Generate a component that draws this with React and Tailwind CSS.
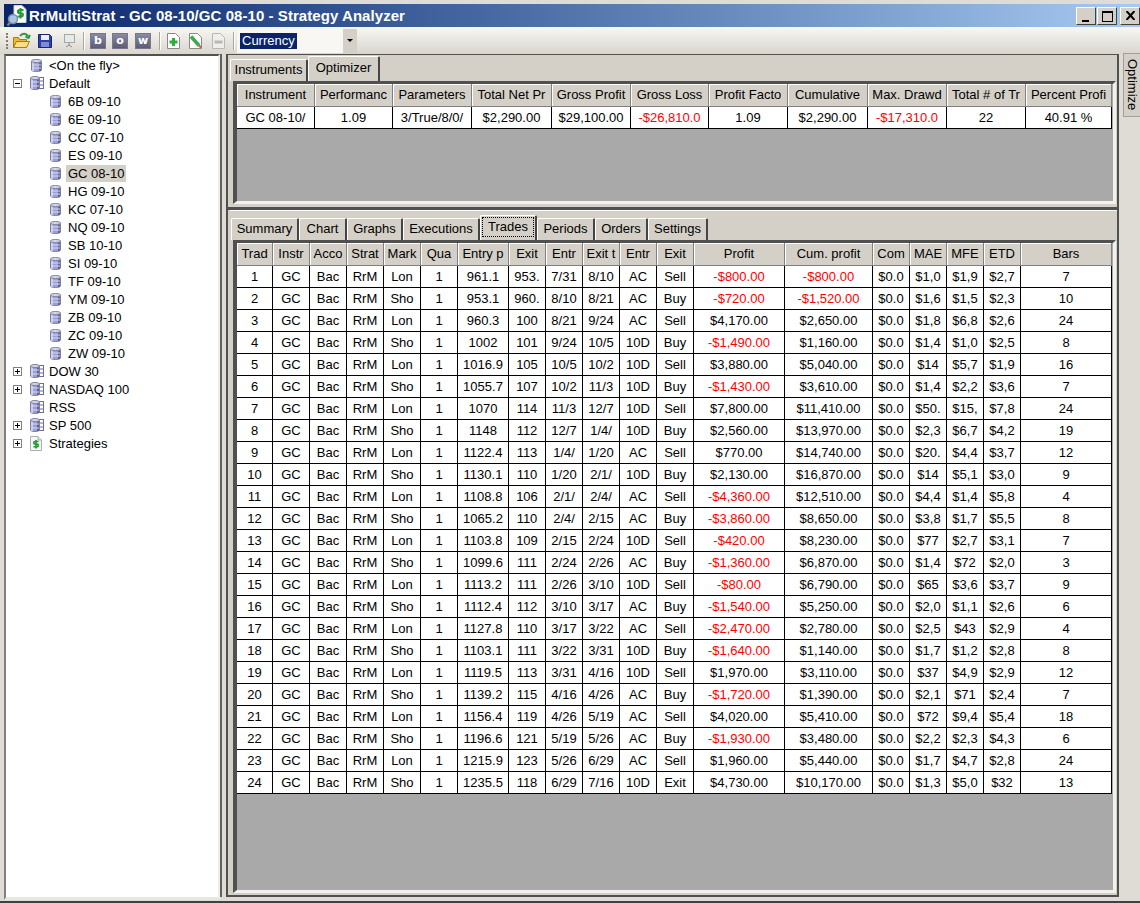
const TOP_COLS = [
  ['Instrument', 78, 'GC 08-10/'],
  ['Performanc', 78, '1.09'],
  ['Parameters', 79, '3/True/8/0/'],
  ['Total Net Pr', 80, '$2,290.00'],
  ['Gross Profit', 79, '$29,100.00'],
  ['Gross Loss', 78, '-$26,810.0'],
  ['Profit Facto', 79, '1.09'],
  ['Cumulative', 80, '$2,290.00'],
  ['Max. Drawd', 79, '-$17,310.0'],
  ['Total # of Tr', 79, '22'],
  ['Percent Profi', 86, '40.91 %'],
];

const COLS = [
  ['Trad', 36], ['Instr', 37], ['Acco', 37], ['Strat', 37], ['Mark', 37], ['Qua', 37],
  ['Entry p', 51], ['Exit', 37], ['Entr', 37], ['Exit t', 37], ['Entr', 37], ['Exit', 37],
  ['Profit', 91], ['Cum. profit', 88], ['Com', 37], ['MAE', 37], ['MFE', 37], ['ETD', 37], ['Bars', 91],
];

// entry, exit, entry time, exit time, entry name, exit name, profit, cum, mae, mfe, etd, bars
const TRADES = [
  ['961.1', '953.', '7/31', '8/10', 'AC', 'Sell', '-$800.00', '-$800.00', '$1,0', '$1,9', '$2,7', 7],
  ['953.1', '960.', '8/10', '8/21', 'AC', 'Buy', '-$720.00', '-$1,520.00', '$1,6', '$1,5', '$2,3', 10],
  ['960.3', '100', '8/21', '9/24', 'AC', 'Sell', '$4,170.00', '$2,650.00', '$1,8', '$6,8', '$2,6', 24],
  ['1002', '101', '9/24', '10/5', '10D', 'Buy', '-$1,490.00', '$1,160.00', '$1,4', '$1,0', '$2,5', 8],
  ['1016.9', '105', '10/5', '10/2', '10D', 'Sell', '$3,880.00', '$5,040.00', '$14', '$5,7', '$1,9', 16],
  ['1055.7', '107', '10/2', '11/3', '10D', 'Buy', '-$1,430.00', '$3,610.00', '$1,4', '$2,2', '$3,6', 7],
  ['1070', '114', '11/3', '12/7', '10D', 'Sell', '$7,800.00', '$11,410.00', '$50.', '$15,', '$7,8', 24],
  ['1148', '112', '12/7', '1/4/', '10D', 'Buy', '$2,560.00', '$13,970.00', '$2,3', '$6,7', '$4,2', 19],
  ['1122.4', '113', '1/4/', '1/20', 'AC', 'Sell', '$770.00', '$14,740.00', '$20.', '$4,4', '$3,7', 12],
  ['1130.1', '110', '1/20', '2/1/', '10D', 'Buy', '$2,130.00', '$16,870.00', '$14', '$5,1', '$3,0', 9],
  ['1108.8', '106', '2/1/', '2/4/', 'AC', 'Sell', '-$4,360.00', '$12,510.00', '$4,4', '$1,4', '$5,8', 4],
  ['1065.2', '110', '2/4/', '2/15', 'AC', 'Buy', '-$3,860.00', '$8,650.00', '$3,8', '$1,7', '$5,5', 8],
  ['1103.8', '109', '2/15', '2/24', '10D', 'Sell', '-$420.00', '$8,230.00', '$77', '$2,7', '$3,1', 7],
  ['1099.6', '111', '2/24', '2/26', 'AC', 'Buy', '-$1,360.00', '$6,870.00', '$1,4', '$72', '$2,0', 3],
  ['1113.2', '111', '2/26', '3/10', '10D', 'Sell', '-$80.00', '$6,790.00', '$65', '$3,6', '$3,7', 9],
  ['1112.4', '112', '3/10', '3/17', 'AC', 'Buy', '-$1,540.00', '$5,250.00', '$2,0', '$1,1', '$2,6', 6],
  ['1127.8', '110', '3/17', '3/22', 'AC', 'Sell', '-$2,470.00', '$2,780.00', '$2,5', '$43', '$2,9', 4],
  ['1103.1', '111', '3/22', '3/31', '10D', 'Buy', '-$1,640.00', '$1,140.00', '$1,7', '$1,2', '$2,8', 8],
  ['1119.5', '113', '3/31', '4/16', '10D', 'Sell', '$1,970.00', '$3,110.00', '$37', '$4,9', '$2,9', 12],
  ['1139.2', '115', '4/16', '4/26', 'AC', 'Buy', '-$1,720.00', '$1,390.00', '$2,1', '$71', '$2,4', 7],
  ['1156.4', '119', '4/26', '5/19', 'AC', 'Sell', '$4,020.00', '$5,410.00', '$72', '$9,4', '$5,4', 18],
  ['1196.6', '121', '5/19', '5/26', 'AC', 'Buy', '-$1,930.00', '$3,480.00', '$2,2', '$2,3', '$4,3', 6],
  ['1215.9', '123', '5/26', '6/29', 'AC', 'Sell', '$1,960.00', '$5,440.00', '$1,7', '$4,7', '$2,8', 24],
  ['1235.5', '118', '6/29', '7/16', '10D', 'Exit', '$4,730.00', '$10,170.00', '$1,3', '$5,0', '$32', 13],
];

const TREE = ['6B 09-10', '6E 09-10', 'CC 07-10', 'ES 09-10', 'GC 08-10', 'HG 09-10', 'KC 07-10', 'NQ 09-10', 'SB 10-10', 'SI 09-10', 'TF 09-10', 'YM 09-10', 'ZB 09-10', 'ZC 09-10', 'ZW 09-10'];

function Cylinder() {
  return (
    <svg width="11" height="13" viewBox="0 0 11 13" className="shrink-0 ml-[1px]">
      <path d="M.5 2v9c0 .9 2.200 1.500 5 1.500s5-.6 5-1.500V2z" fill="#9a9fd6" stroke="#7c7f9c" />
      <rect x="1" y="3" width="2" height="9" fill="#c9cbee" />
      <rect x="8" y="3" width="2" height="9" fill="#5e6396" />
      <path d="M1 6h9M1 9h9" stroke="#d9dbf2" />
      <ellipse cx="5.500" cy="2" rx="5" ry="1.500" fill="#dadcf2" stroke="#7c7f9c" />
    </svg>
  );
}

function DbGroup() {
  return (
    <svg width="14" height="14" viewBox="0 0 14 14" className="shrink-0">
      <rect x="8.500" y="1.500" width="5" height="11" fill="#fff" stroke="#6a7090" />
      <path d="M9 5h4M9 9h4" stroke="#6a7090" />
      <path d="M.5 2v10c0 .9 2 1.500 4.500 1.500s4.500-.6 4.500-1.500V2z" fill="#9a9fd6" stroke="#7c7f9c" />
      <rect x="1" y="3" width="2" height="10" fill="#c9cbee" />
      <rect x="7" y="3" width="2" height="10" fill="#5e6396" />
      <path d="M1 6h8M1 10h8" stroke="#d9dbf2" />
      <ellipse cx="5" cy="2" rx="4.500" ry="1.500" fill="#dadcf2" stroke="#7c7f9c" />
    </svg>
  );
}

function DollarDoc() {
  return (
    <svg width="12" height="15" viewBox="0 0 12 15" className="shrink-0">
      <path d="M.5.5h7.500l3.500 3.500v10.500H.5z" fill="#f6f8f6" stroke="#a8b0b0" />
      <path d="M8 .5V4h3.500" fill="#dfe4e4" stroke="#a8b0b0" />
      <path d="M8.500 5.500H5a1.200 1.200 0 0 0 0 2.600h2a1.200 1.200 0 0 1 0 2.600H3.500M6 4v8.500" fill="none" stroke="#1f9a35" strokeWidth="1.600" />
    </svg>
  );
}

function AppIcon() {
  return (
    <svg width="20" height="22" viewBox="0 0 20 22" className="shrink-0">
      <path d="M7 .5h8l4 4v13H7z" fill="#fff" stroke="#d0d4d8" />
      <path d="M16.500 5H12.500a1.500 1.500 0 0 0 0 3.200h1.800a1.500 1.500 0 0 1 0 3.200H10.500M13.500 3v10.500" fill="none" stroke="#1f9a35" strokeWidth="2" />
      <circle cx="6" cy="14" r="4.500" fill="#a9c4e4" stroke="#7a8aa8" strokeWidth="1.500" />
      <path d="M3 17.500l-2.500 3" stroke="#7a8298" strokeWidth="2.500" />
    </svg>
  );
}

function Expander({ open }) {
  return (
    <span className="w-[9px] h-[9px] border border-[#808080] bg-white relative shrink-0">
      <span className="absolute left-[1px] top-[3px] w-[5px] h-px bg-black" />
      {!open && <span className="absolute left-[3px] top-[1px] w-px h-[5px] bg-black" />}
    </span>
  );
}

function TreeRow({ indent, expander, open, icon, label, selected }) {
  return (
    <div className="h-[18px] flex items-center" style={{ paddingLeft: indent }}>
      <span className="w-[17px] shrink-0 flex items-center">{expander && <Expander open={open} />}</span>
      <span className="w-[17px] shrink-0 flex items-center">{icon}</span>
      <span className={`px-[2px] leading-[17px] ${selected ? 'bg-[#d4d0c8]' : ''}`}>{label}</span>
    </div>
  );
}

function LetterButton({ letter, className = '' }) {
  return (
    <span className={`w-[16px] h-[16px] bg-gradient-to-b from-[#8a8aa4] to-[#5c5c78] border border-[#77778c] text-white font-bold text-[11px] leading-[13px] text-center shrink-0 [font-family:'DejaVu_Sans',sans-serif] ${className}`}>{letter}</span>
  );
}

function ToolSep({ className = '' }) {
  return <span className={`w-px h-[18px] bg-[#a8a69e] shadow-[1px_0_0_#fff] shrink-0 ${className}`} />;
}

function Tab({ label, active, focused, width }) {
  return (
    <div className={`border-t border-l border-white border-r-2 border-r-[#444] rounded-t-[2px] flex items-center justify-center bg-[#d4d0c8] shrink-0 ${active ? 'h-[25px] pb-[3px] px-[1px]' : 'h-[22px] pb-[1px]'}`} style={{ width }}>
      {focused
        ? <span className="w-full h-[20px] flex items-center justify-center outline-1 outline-dotted outline-black -outline-offset-1">{label}</span>
        : label}
    </div>
  );
}

function HeaderCell({ label, width }) {
  return (
    <div className="h-[23px] shrink-0 flex items-center justify-center overflow-hidden whitespace-nowrap bg-[#d4d0c8] border-r border-b border-r-[#808080] border-b-[#808080] shadow-[inset_1px_1px_0_#fff]" style={{ width }}>
      {label}
    </div>
  );
}

function Cell({ width, red, children }) {
  return (
    <div className={`h-[22px] shrink-0 flex items-center justify-center overflow-hidden whitespace-nowrap bg-white border-r border-b border-black ${red ? 'text-[#ff0000]' : ''}`} style={{ width }}>
      {children}
    </div>
  );
}

function GridFrame({ className, children }) {
  return (
    <div className={`ml-[3px] w-[883px] shrink-0 bg-[#a9a9a9] border-t-[3px] border-l-4 border-t-[#505050] border-l-[#505050] border-r-[3px] border-b-[3px] border-r-[#f2f1ed] border-b-[#f2f1ed] ${className}`}>
      {children}
    </div>
  );
}

export default function App() {
  return (
    <div className="w-[1140px] h-[903px] overflow-hidden bg-[#dedcd5] flex flex-col text-[13px] text-black border-b-2 border-[#404040] [font-family:'Liberation_Sans',Arial,sans-serif]">
      {/* Title bar */}
      <div className="h-[23px] shrink-0 mt-[4px] ml-[4px] bg-gradient-to-r from-[#0a246a] to-[#a6caf0] flex items-center pl-[3px]">
        <AppIcon />
        <span className="ml-[2px] pt-px text-white font-bold text-[15px] tracking-[0.06px] flex-1 whitespace-nowrap">RrMultiStrat - GC 08-10/GC 08-10 - Strategy Analyzer</span>
        <span className="w-[20px] h-[18px] bg-[#d4d0c8] border border-t-white border-l-white border-r-[#404040] border-b-[#404040] relative">
          <span className="absolute left-[5px] bottom-[2px] w-[7px] h-[2px] bg-black" />
        </span>
        <span className="w-[20px] h-[18px] ml-[1px] bg-[#d4d0c8] border border-t-white border-l-white border-r-[#404040] border-b-[#404040] relative">
          <span className="absolute left-[4px] top-[3px] w-[11px] h-[11px] border border-t-2 border-black" />
        </span>
        <span className="w-[20px] h-[18px] ml-[3px] bg-[#d4d0c8] border border-t-white border-l-white border-r-[#404040] border-b-[#404040] flex items-center justify-center">
          <svg width="9" height="9" viewBox="0 0 9 9"><path d="M.5 0l8 9M8.500 0l-8 9" stroke="#000" strokeWidth="2" /></svg>
        </span>
      </div>

      {/* Toolbar */}
      <div className="h-[27px] shrink-0 bg-gradient-to-b from-[#f8f7f3] to-[#d9d6ce] flex items-center pl-[6px]">
        <span className="w-[2px] h-[16px] border-l-2 border-dotted border-[#807d75] mr-[5px] shrink-0" />
        <svg width="18" height="17" viewBox="0 0 18 17" className="shrink-0">
          <path d="M.5 5.500h5l1 2h7v8h-13z" fill="#e8b83c" stroke="#a87a10" />
          <path d="M.5 15.500l3-6h13l-3 6z" fill="#fbdf80" stroke="#a87a10" />
          <path d="M7 4c2-3 6-3.500 8 .5M12.500 4.500l3 1.500 1.500-3" fill="none" stroke="#2b9a3a" strokeWidth="2" />
        </svg>
        <svg width="14" height="14" viewBox="0 0 14 14" className="shrink-0 ml-[7px]">
          <path d="M.5.5h11l2 2v11H.5z" fill="#2f3fa8" stroke="#1c2570" />
          <rect x="3" y="1" width="8" height="5" fill="#eceef8" />
          <rect x="3" y="8" width="8" height="5" fill="#7f8bd8" />
        </svg>
        <svg width="12" height="15" viewBox="0 0 12 15" className="shrink-0 ml-[11px]">
          <rect x="1.500" y="1.500" width="10" height="8" fill="#e8eaea" stroke="#a4a8a8" />
          <path d="M6 10v2M3 14l3-2 3 2" fill="none" stroke="#8c9090" />
        </svg>
        <ToolSep className="ml-[8px]" />
        <LetterButton letter="b" className="ml-[6px]" />
        <LetterButton letter="o" className="ml-[6px]" />
        <LetterButton letter="w" className="ml-[7px]" />
        <ToolSep className="ml-[8px]" />
        <svg width="15" height="16" viewBox="0 0 15 16" className="shrink-0 ml-[6px]">
          <path d="M1.500.5h8l4 4v11h-12z" fill="#fff" stroke="#8a8a8a" />
          <path d="M7.500 5v8M3.500 9h8" stroke="#2fae3a" strokeWidth="3" />
        </svg>
        <svg width="15" height="16" viewBox="0 0 15 16" className="shrink-0 ml-[7px]">
          <path d="M1.500.5h8l4 4v11h-12z" fill="#fff" stroke="#8a8a8a" />
          <path d="M3 3.500l8 9" stroke="#3faa4a" strokeWidth="3.500" />
          <path d="M11 12.500l2 2" stroke="#c05050" strokeWidth="2" />
        </svg>
        <svg width="15" height="16" viewBox="0 0 15 16" className="shrink-0 ml-[8px]">
          <path d="M1.500.5h8l4 4v11h-12z" fill="#eeeeea" stroke="#b8b8b4" />
          <path d="M3.500 9h8" stroke="#b8b8b4" strokeWidth="3" />
        </svg>
        <ToolSep className="ml-[7px]" />
        <div className="w-[120px] h-[24px] ml-[3px] bg-[#f8f7f4] flex items-center pl-[3px] shrink-0 relative">
          <span className="bg-[#0a246a] text-white leading-[16px] px-[2px]">Currency</span>
          <span className="absolute right-0 top-0 w-[14px] h-[24px] bg-[#d4d0c8] flex items-center justify-center">
            <span className="border-x-[3px] border-x-transparent border-t-[3px] border-t-black" />
          </span>
        </div>
      </div>

      {/* Main */}
      <div className="flex-1 min-h-0 flex pl-[4px]">
        {/* Tree pane */}
        <div className="w-[216px] h-[846px] shrink-0 bg-white border-t-2 border-l-2 border-t-[#505050] border-l-[#808080] border-r-2 border-b-[3px] border-r-[#eeeeea] border-b-[#e8e6e0] pl-[1px]">
          <TreeRow indent={6} icon={<Cylinder />} label="<On the fly>" />
          <TreeRow indent={6} expander open icon={<DbGroup />} label="Default" />
          {TREE.map(name => (
            <TreeRow key={name} indent={25} icon={<Cylinder />} label={name} selected={name === 'GC 08-10'} />
          ))}
          <TreeRow indent={6} expander icon={<DbGroup />} label="DOW 30" />
          <TreeRow indent={6} expander icon={<DbGroup />} label="NASDAQ 100" />
          <TreeRow indent={6} icon={<DbGroup />} label="RSS" />
          <TreeRow indent={6} expander icon={<DbGroup />} label="SP 500" />
          <TreeRow indent={6} expander icon={<DollarDoc />} label="Strategies" />
        </div>
        <div className="w-[2px] h-[843px] bg-[#606060] shrink-0" />

        {/* Right content */}
        <div className="w-[893px] h-[843px] ml-[4px] shrink-0 flex flex-col bg-[#d4d0c8] border-l-2 border-r-2 border-t border-b-2 border-[#505050]">
          {/* Optimizer pane */}
          <div className="h-[152px] shrink-0 flex flex-col pl-[2px]">
            <div className="h-[26px] shrink-0 flex items-end">
              <Tab label="Instruments" width={78} />
              <Tab label="Optimizer" active width={72} />
            </div>
            <GridFrame className="h-[123px]">
              <div className="flex">
                {TOP_COLS.map(([label, w]) => <HeaderCell key={label} label={label} width={w} />)}
              </div>
              <div className="flex">
                {TOP_COLS.map(([label, w, value]) => (
                  <Cell key={label} width={w} red={value.startsWith('-')}>{value}</Cell>
                ))}
              </div>
            </GridFrame>
          </div>

          {/* Trades pane */}
          <div className="flex-1 min-h-0 flex flex-col pl-[2px] border-t-[3px] border-[#505050]">
            <div className="h-[30px] shrink-0 flex items-end pl-[1px] border-t border-white">
              <Tab label="Summary" width={68} />
              <Tab label="Chart" width={48} />
              <Tab label="Graphs" width={56} />
              <Tab label="Executions" width={77} />
              <Tab label="Trades" active focused width={57} />
              <Tab label="Periods" width={58} />
              <Tab label="Orders" width={53} />
              <Tab label="Settings" width={60} />
            </div>
            <GridFrame className="h-[653px]">
              <div className="flex">
                {COLS.map(([label, w], i) => <HeaderCell key={i} label={label} width={w} />)}
              </div>
              {TRADES.map((t, i) => {
                const row = [i + 1, 'GC', 'Bac', 'RrM', i % 2 ? 'Sho' : 'Lon', 1, t[0], t[1], t[2], t[3], t[4], t[5], t[6], t[7], '$0.0', t[8], t[9], t[10], t[11]];
                return (
                  <div key={i} className="flex">
                    {row.map((v, j) => (
                      <Cell key={j} width={COLS[j][1]} red={String(v).startsWith('-')}>{v}</Cell>
                    ))}
                  </div>
                );
              })}
            </GridFrame>
          </div>
        </div>

        {/* Side tab */}
        <div className="w-[21px] shrink-0 pl-[4px]">
          <div className="h-[64px] w-[17px] -mt-[1px] border border-[#a0a0a0] border-r-0 bg-[#d4d0c8] flex items-center justify-center">
            <span className="[writing-mode:vertical-rl] leading-none">Optimize</span>
          </div>
        </div>
      </div>
    </div>
  );
}
